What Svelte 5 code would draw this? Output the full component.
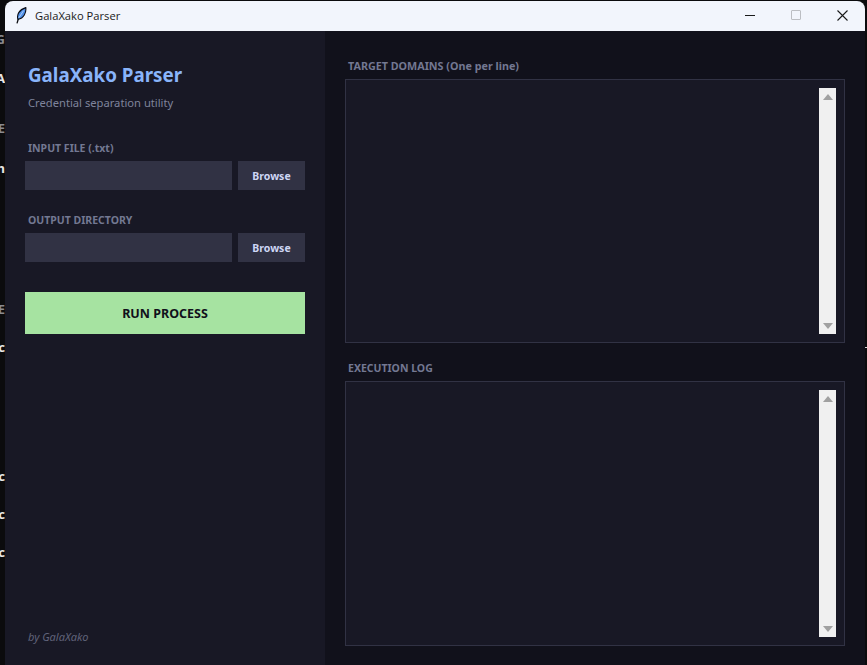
<script lang="ts">
	// fragments of the window behind, only their last pixels show at the left edge
	const behind = [
		{ text: 'G', height: 47, color: '#8a8a90' },
		{ text: 'A', height: 39, color: '#e6e6e6' },
		{ text: 'E', height: 50, color: '#8a8a90' },
		{ text: 'n', height: 40, color: '#e6e6e6' },
		{ text: 'E', height: 141, color: '#8a8a90' },
		{ text: 'c', height: 38, color: '#e6e6e6' },
		{ text: 'c', height: 129, color: '#e6e6e6' },
		{ text: 'c', height: 38, color: '#e6e6e6' },
		{ text: 'c', height: 38, color: '#e6e6e6' }
	];
</script>

<div class="screen">
	<div class="behind">
		{#each behind as row}
			<div class="behind-row" style="height: {row.height}px; color: {row.color}">{row.text}</div>
		{/each}
	</div>

	<div class="window">
		<header class="titlebar">
			<svg class="feather" width="12" height="18" viewBox="0 0 12 18">
				<path d="M2 16.4 L3.6 11" stroke="#0b0b0f" stroke-width="1.3" fill="none" />
				<path d="M3 12.4 C1.4 8 4 2.6 10.8 0.6 C11.4 5.6 8.8 11.6 3 12.4 Z" fill="#4f8fe8" stroke="#0b0e16" stroke-width="1.1" />
				<path d="M3.8 10.8 L8.6 3.6" stroke="#d5e6fb" stroke-width="0.7" fill="none" />
			</svg>
			<span class="app-title">GalaXako Parser</span>
			<div class="controls">
				<div class="control"><span class="minimize"></span></div>
				<div class="control"><span class="maximize"></span></div>
				<div class="control">
					<svg width="11" height="11" viewBox="0 0 11 11">
						<path d="M0.5 0.5 L10.5 10.5 M10.5 0.5 L0.5 10.5" stroke="#1a1a1a" stroke-width="1.1" fill="none" />
					</svg>
				</div>
			</div>
		</header>

		<div class="content">
			<aside class="sidebar">
				<h1>GalaXako Parser</h1>
				<p class="subtitle">Credential separation utility</p>

				<div class="field first">
					<div class="label">INPUT FILE (.txt)</div>
					<div class="input-row">
						<input type="text" />
						<button type="button" class="browse">Browse</button>
					</div>
				</div>

				<div class="field">
					<div class="label">OUTPUT DIRECTORY</div>
					<div class="input-row">
						<input type="text" />
						<button type="button" class="browse">Browse</button>
					</div>
				</div>

				<button type="button" class="run">RUN PROCESS</button>

				<div class="credit">by GalaXako</div>
			</aside>

			<main class="main">
				<section class="panel">
					<div class="label wide">TARGET DOMAINS (One per line)</div>
					<div class="box">
						<div class="scrollbar">
							<span class="arrow up"></span>
							<span class="arrow down"></span>
						</div>
					</div>
				</section>

				<section class="panel lower">
					<div class="label">EXECUTION LOG</div>
					<div class="box">
						<div class="scrollbar">
							<span class="arrow up"></span>
							<span class="arrow down"></span>
						</div>
					</div>
				</section>
			</main>
		</div>
	</div>

	<div class="edge"><span class="tick"></span></div>
</div>

<style>
	:global(body) {
		margin: 0;
		background: #0b0b0d;
	}

	.screen {
		display: flex;
		width: 867px;
		height: 665px;
		overflow: hidden;
		background: #0b0b0d;
		font-family: "Noto Sans", "Open Sans", sans-serif;
	}

	.behind {
		width: 5px;
		flex-shrink: 0;
		overflow: hidden;
	}

	.behind-row {
		display: flex;
		justify-content: flex-end;
		align-items: flex-end;
		font-size: 13px;
		font-weight: 700;
		line-height: 16px;
		overflow: hidden;
	}

	.edge {
		flex: 1;
		padding-top: 347px;
	}

	.tick {
		display: block;
		width: 2px;
		height: 1px;
		background: #d8d8d8;
	}

	.window {
		width: 860px;
		margin-top: 1px;
		flex-shrink: 0;
		display: flex;
		flex-direction: column;
		border-radius: 8px 8px 0 0;
		overflow: hidden;
	}

	.titlebar {
		height: 30px;
		flex-shrink: 0;
		display: flex;
		align-items: center;
		background: #f2f5fc;
		color: #1a1a1a;
	}

	.feather {
		margin-left: 10px;
	}

	.app-title {
		margin-left: 8px;
		margin-bottom: 1px;
		font-family: "Open Sans", "Noto Sans", sans-serif;
		font-size: 11.2px;
	}

	.controls {
		display: flex;
		margin-left: auto;
		height: 100%;
		box-sizing: border-box;
		padding-bottom: 2px;
	}

	.control {
		width: 46px;
		display: flex;
		align-items: center;
		justify-content: center;
	}

	.minimize {
		width: 10px;
		height: 1px;
		background: #1a1a1a;
	}

	.maximize {
		width: 8px;
		height: 8px;
		border: 1px solid #bcbec3;
		border-radius: 1px;
	}

	.content {
		flex: 1;
		display: flex;
		min-height: 0;
	}

	.sidebar {
		width: 320px;
		flex-shrink: 0;
		box-sizing: border-box;
		padding: 30px 20px 21px 20px;
		display: flex;
		flex-direction: column;
		background: #181825;
	}

	h1 {
		margin: 0 0 0 3px;
		font-size: 18.8px;
		line-height: 28px;
		font-weight: 700;
		color: #89b4fa;
	}

	.subtitle {
		margin: 6px 0 0 3px;
		font-size: 11.2px;
		line-height: 16px;
		color: #7f849c;
	}

	.field {
		margin-top: 23px;
	}

	.field.first {
		margin-top: 30px;
	}

	.label {
		margin-left: 3px;
		font-size: 10.5px;
		line-height: 14px;
		font-weight: 700;
		color: #737892;
	}

	.label.wide {
		font-size: 10.75px;
	}

	.input-row {
		display: flex;
		gap: 6px;
		margin-top: 6px;
	}

	input {
		width: 207px;
		height: 29px;
		box-sizing: border-box;
		padding: 0 4px;
		border: none;
		outline: none;
		background: #313244;
		color: #cdd6f4;
	}

	.browse {
		flex: 1;
		height: 29px;
		padding: 0;
		border: none;
		background: #313244;
		color: #cdd6f4;
		font-family: inherit;
		font-size: 10.5px;
		font-weight: 700;
	}

	.run {
		margin-top: 30px;
		height: 42px;
		padding: 0;
		border: none;
		background: #a6e3a1;
		color: #11111b;
		font-family: inherit;
		font-size: 12.5px;
		font-weight: 700;
	}

	.credit {
		margin-top: auto;
		margin-left: 3px;
		font-size: 11px;
		line-height: 14px;
		font-style: italic;
		color: #60637a;
	}

	.main {
		flex: 1;
		box-sizing: border-box;
		padding: 28px 20px 19px 20px;
		display: flex;
		flex-direction: column;
		background: #11111b;
	}

	.panel {
		display: flex;
		flex-direction: column;
		height: 284px;
	}

	.panel.lower {
		margin-top: 18px;
		height: 285px;
	}

	.box {
		flex: 1;
		margin-top: 6px;
		box-sizing: border-box;
		padding: 8px;
		display: flex;
		justify-content: flex-end;
		background: #181825;
		border: 1px solid #313244;
	}

	.scrollbar {
		width: 17px;
		display: flex;
		flex-direction: column;
		justify-content: space-between;
		align-items: center;
		padding: 6px 0 5px;
		background: #f0f0f0;
	}

	.arrow {
		width: 0;
		height: 0;
		border-left: 5px solid transparent;
		border-right: 5px solid transparent;
	}

	.arrow.up {
		border-bottom: 6px solid #a0a0a0;
	}

	.arrow.down {
		border-top: 6px solid #a0a0a0;
	}
</style>
